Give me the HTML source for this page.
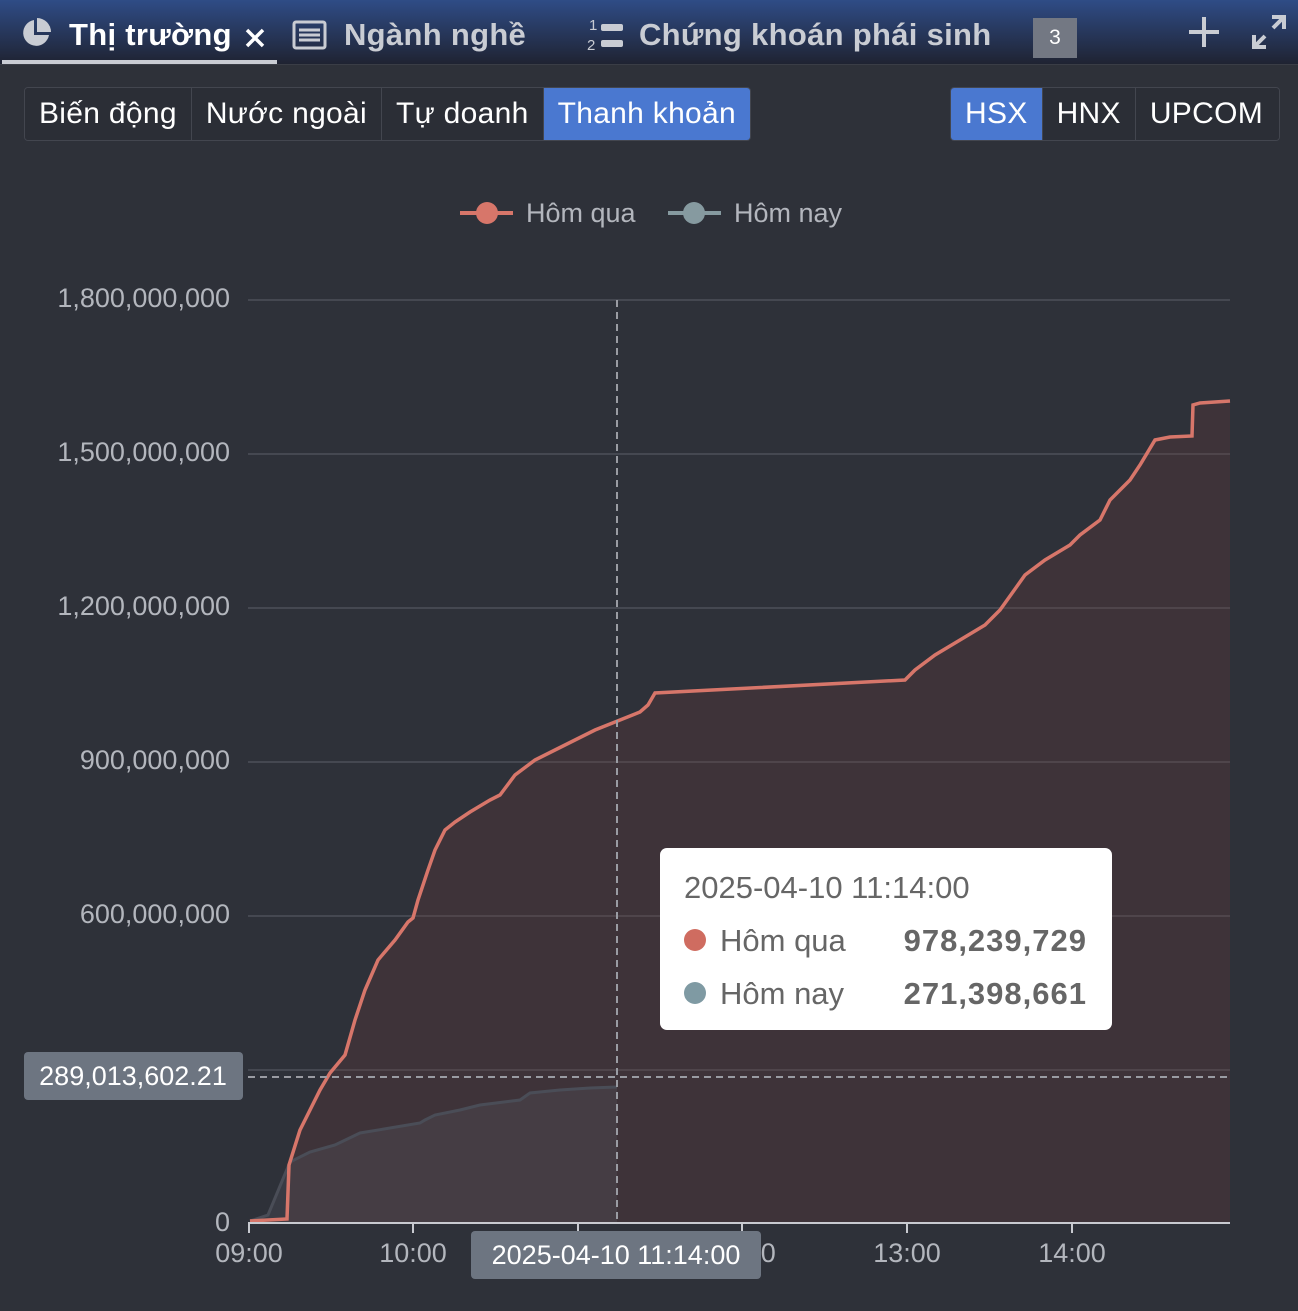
<!DOCTYPE html>
<html><head><meta charset="utf-8"><style>
*{margin:0;padding:0;box-sizing:border-box}
body{width:1298px;height:1311px;background:#2e3139;font-family:"Liberation Sans",Arial,sans-serif;position:relative;overflow:hidden}
.top{position:absolute;left:0;top:0;width:1298px;height:65px;background:linear-gradient(#2f4c86,#1f2332);border-bottom:1px solid #3a3d46}
.tab{position:absolute;top:17px;font-weight:bold;font-size:31px;color:#c9ccd3;letter-spacing:0.3px}
.btns{position:absolute;top:87px;height:54px;display:flex;border:1px solid #43464f;border-radius:4px;overflow:hidden}
.btns div{padding:0 14px;line-height:52px;font-size:30px;color:#fff;border-right:1px solid #43464f;background:#2b2e36;letter-spacing:0.3px}
.btns div:last-child{border-right:none}
.btns .on{background:#4a78d0}
svg text{font-family:"Liberation Sans",sans-serif}
</style></head><body>
<div class="top">
 <svg style="position:absolute;left:20px;top:17px" width="32" height="32" viewBox="0 0 32 32"><path d="M14 3A13 13 0 1 0 29 18H14Z" fill="#c9ccd3"/><path d="M17 1V15H31A14 14 0 0 0 17 1Z" fill="#c9ccd3"/></svg>
 <div class="tab" style="left:69px;color:#fff">Thị trường</div>
 <svg style="position:absolute;left:244px;top:27px" width="22" height="22"><path d="M3 3L19 19M19 3L3 19" stroke="#fff" stroke-width="3.5"/></svg>
 <div style="position:absolute;left:2px;top:60px;width:275px;height:4px;background:#c9ccd3"></div>
 <svg style="position:absolute;left:292px;top:20px" width="36" height="30"><rect x="2" y="2" width="31" height="26" rx="2" fill="none" stroke="#c9ccd3" stroke-width="3"/><path d="M7 10H28M7 15H28M7 20H28" stroke="#c9ccd3" stroke-width="3"/></svg>
 <div class="tab" style="left:344px">Ngành nghề</div>
 <svg style="position:absolute;left:586px;top:15px" width="40" height="40"><text x="3" y="15" font-size="15" fill="#c9ccd3">1</text><text x="1" y="35" font-size="15" fill="#c9ccd3">2</text><rect x="15" y="9" width="22" height="7" rx="2" fill="#c9ccd3"/><rect x="15" y="25" width="22" height="7" rx="2" fill="#c9ccd3"/></svg>
 <div class="tab" style="left:639px">Chứng khoán phái sinh</div>
 <div style="position:absolute;left:1033px;top:18px;width:44px;height:40px;background:#737883;color:#fff;font-size:21px;text-align:center;line-height:40px">3</div>
 <svg style="position:absolute;left:1186px;top:14px" width="36" height="36"><path d="M18 3V33M3 18H33" stroke="#c9ccd3" stroke-width="4"/></svg>
 <svg style="position:absolute;left:1250px;top:13px" width="38" height="38"><path d="M22 4H34V16M34 4L23 15M4 22V34H16M4 34L15 23" stroke="#c9ccd3" stroke-width="4" fill="none"/></svg>
</div>
<div class="btns" style="left:24px"><div>Biến động</div><div>Nước ngoài</div><div>Tự doanh</div><div class="on">Thanh khoản</div></div>
<div class="btns" style="left:950px;width:330px"><div class="on">HSX</div><div>HNX</div><div style="flex:1">UPCOM</div></div>
<svg style="position:absolute;left:0;top:0" width="1298" height="1311">
 <g stroke="#454851" stroke-width="2">
  <line x1="248" y1="300" x2="1230" y2="300"/><line x1="248" y1="454" x2="1230" y2="454"/><line x1="248" y1="608" x2="1230" y2="608"/><line x1="248" y1="762" x2="1230" y2="762"/><line x1="248" y1="916" x2="1230" y2="916"/><line x1="248" y1="1070" x2="1230" y2="1070"/>
 </g>
 <g font-size="27" fill="#b3b6bd" text-anchor="end">
  <text x="230" y="307">1,800,000,000</text><text x="230" y="461">1,500,000,000</text><text x="230" y="615">1,200,000,000</text><text x="230" y="769">900,000,000</text><text x="230" y="923">600,000,000</text><text x="230" y="1231">0</text>
 </g>
 <path d="M250,1221L287,1219L289,1165L300,1130L310,1110L320,1090L330,1073L345,1055L355,1020L365,990L378,960L395,940L408,922L413,918L418,900L428,870L435,850L445,830L455,822L470,812L490,800L500,795L515,775L535,760L555,750L575,740L595,730L615,722L640,712L648,705L655,693L905,680L915,670L935,655L960,640L985,625L1000,610L1025,575L1045,560L1070,545L1080,535L1100,520L1110,500L1130,480L1140,465L1155,440L1170,437L1192,436L1193,405L1200,403L1230,401L1230,1223L250,1223Z" fill="#6e3a3a" fill-opacity="0.25"/>
 <path d="M250,1221L268,1215L290,1162L310,1152L335,1145L360,1133L390,1128L420,1123L425,1120L435,1115L460,1110L480,1105L520,1100L530,1093L560,1090L590,1088L617,1087L617,1223L250,1223Z" fill="#5a5a66" fill-opacity="0.25"/>
 <path d="M250,1221L268,1215L290,1162L310,1152L335,1145L360,1133L390,1128L420,1123L425,1120L435,1115L460,1110L480,1105L520,1100L530,1093L560,1090L590,1088L617,1087" fill="none" stroke="#4a4d57" stroke-width="3"/>
 <path d="M250,1221L287,1219L289,1165L300,1130L310,1110L320,1090L330,1073L345,1055L355,1020L365,990L378,960L395,940L408,922L413,918L418,900L428,870L435,850L445,830L455,822L470,812L490,800L500,795L515,775L535,760L555,750L575,740L595,730L615,722L640,712L648,705L655,693L905,680L915,670L935,655L960,640L985,625L1000,610L1025,575L1045,560L1070,545L1080,535L1100,520L1110,500L1130,480L1140,465L1155,440L1170,437L1192,436L1193,405L1200,403L1230,401" fill="none" stroke="#d7766a" stroke-width="3.5"/>
 <line x1="248" y1="1223" x2="1230" y2="1223" stroke="#c8cad0" stroke-width="2"/>
 <g stroke="#c8cad0" stroke-width="2"><line x1="249" y1="1223" x2="249" y2="1233"/><line x1="413" y1="1223" x2="413" y2="1233"/><line x1="578" y1="1223" x2="578" y2="1233"/><line x1="742" y1="1223" x2="742" y2="1233"/><line x1="907" y1="1223" x2="907" y2="1233"/><line x1="1072" y1="1223" x2="1072" y2="1233"/></g>
 <g font-size="27" fill="#b3b6bd" text-anchor="middle"><text x="249" y="1262">09:00</text><text x="413" y="1262">10:00</text><text x="742" y="1262">12:00</text><text x="907" y="1262">13:00</text><text x="1072" y="1262">14:00</text></g>
 <line x1="617" y1="300" x2="617" y2="1223" stroke="#9a9ca3" stroke-width="2" stroke-dasharray="7,5"/>
 <line x1="248" y1="1077" x2="1230" y2="1077" stroke="#9a9ca3" stroke-width="2" stroke-dasharray="7,5"/>
 <rect x="24" y="1052" width="219" height="48" rx="4" fill="#6d7581"/>
 <text x="133" y="1085" font-size="27" fill="#fff" text-anchor="middle">289,013,602.21</text>
 <rect x="471" y="1231" width="290" height="48" rx="4" fill="#6d7581"/>
 <text x="616" y="1264" font-size="27" fill="#fff" text-anchor="middle">2025-04-10 11:14:00</text>
 <line x1="460" y1="213" x2="513" y2="213" stroke="#d7766a" stroke-width="4"/><circle cx="487" cy="213" r="11" fill="#d7766a"/>
 <text x="526" y="222" font-size="27" fill="#b3b6bd">Hôm qua</text>
 <line x1="668" y1="213" x2="721" y2="213" stroke="#869aa0" stroke-width="4"/><circle cx="694" cy="213" r="11" fill="#869aa0"/>
 <text x="734" y="222" font-size="27" fill="#b3b6bd">Hôm nay</text>
 <rect x="660" y="848" width="452" height="182" rx="7" fill="#fff"/>
 <text x="684" y="898" font-size="31" fill="#666">2025-04-10 11:14:00</text>
 <circle cx="695" cy="940" r="11" fill="#cf6c60"/><text x="720" y="951" font-size="31" fill="#666">Hôm qua</text>
 <text x="1087" y="951" font-size="31" fill="#666" font-weight="bold" text-anchor="end" letter-spacing="1">978,239,729</text>
 <circle cx="695" cy="993" r="11" fill="#7f9aa3"/><text x="720" y="1004" font-size="31" fill="#666">Hôm nay</text>
 <text x="1087" y="1004" font-size="31" fill="#666" font-weight="bold" text-anchor="end" letter-spacing="1">271,398,661</text>
</svg>
</body></html>
